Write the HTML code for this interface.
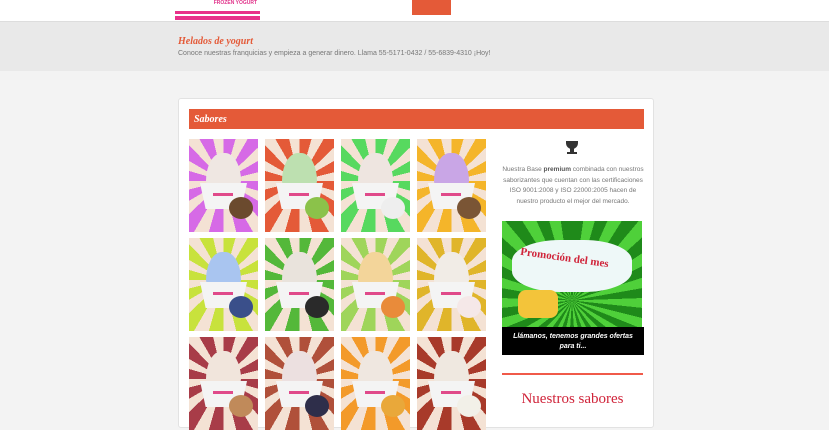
<!DOCTYPE html>
<html><head><meta charset="utf-8"><style>
*{margin:0;padding:0;box-sizing:border-box}
body{width:829px;height:410px;overflow:hidden;background:#f3f3f3;font-family:"Liberation Sans",sans-serif;position:relative}
.hdr{position:absolute;left:0;top:0;width:829px;height:22px;background:#fff;border-bottom:1px solid #ddd}
.band{position:absolute;left:0;top:22px;width:829px;height:49px;background:#e9e9e9}
.card{position:absolute;left:178px;top:98px;width:476px;height:330px;background:#fff;border:1px solid #e2e2e2;border-radius:3px}
.bar{position:absolute;left:189px;top:109px;width:455px;height:20px;background:#e45a38;color:#fff;font:italic bold 10px "Liberation Serif",serif;padding:5px 0 0 5px}
.t{position:absolute;width:69px;height:93px;overflow:hidden}
.cup{position:absolute;left:11px;top:44px;width:47px;height:26px;background:#f4f4f4;clip-path:polygon(0 0,100% 0,88% 100%,12% 100%);}
.cup:after{content:"";position:absolute;left:13px;top:10px;width:20px;height:3px;background:#e04a8a}
.ice{position:absolute;left:17px;top:14px;width:35px;height:34px;border-radius:50% 50% 20% 20%/90% 90% 20% 20%}
.fr{position:absolute;left:40px;top:58px;width:24px;height:22px;border-radius:50%}
</style></head><body>
<div class="hdr"></div>
<div style="position:absolute;left:195px;top:0;width:62px;height:8px;font:bold 5px 'Liberation Sans';color:#e0338a;text-align:right">FROZEN YOGURT</div>
<div style="position:absolute;left:175px;top:11px;width:85px;height:3px;background:#e8318a"></div>
<div style="position:absolute;left:175px;top:16px;width:85px;height:4px;background:#e8318a"></div>
<div style="position:absolute;left:412px;top:0;width:39px;height:15px;background:#e45a38"></div>
<div class="band"></div>
<div style="position:absolute;left:178px;top:36px;font:italic bold 10px 'Liberation Serif',serif;color:#e45a38">Helados de yogurt</div>
<div style="position:absolute;left:178px;top:50px;font-size:7px;color:#777">Conoce nuestras franquicias y empieza a generar dinero. Llama 55-5171-0432 / 55-6839-4310 ¡Hoy!</div>
<div class="card"></div>
<div class="bar">Sabores</div>

<div id="g"></div>
<script>
var rays=['#d66ae6','#e45a38','#57d95f','#f4b52a','#c8e23c','#54b83a','#9fd55a','#e0b52a','#a83c48','#b0503a','#f39a2a','#a83a2a'];
var ices=['#efe7e2','#bde0b0','#eee5e0','#c9a6e6','#a9c5f0','#e9e3dc','#f3d59a','#f1ece6','#f1e5dc','#ece0e0','#efe7e0','#efe8e0'];
var frs=['#6b4a2e','#8bc24a','#eeeeee','#7a5535','#3a4f8a','#2a2a2a','#e98b3a','#f5e8e8','#c08a5a','#2e2e4a','#e9a83a','#f2f0e8'];
var xs=[189,265,341,417],ys=[139,238,337],h='';
for(var i=0;i<12;i++){var x=xs[i%4],y=ys[Math.floor(i/4)];
h+='<div class="t" style="left:'+x+'px;top:'+y+'px;background:repeating-conic-gradient(from 0deg at 50% 45%,'+rays[i]+' 0 16deg,#f4e2d4 16deg 30deg)"><div class="ice" style="background:'+ices[i]+'"></div><div class="cup"></div><div class="fr" style="background:'+frs[i]+'"></div></div>';}
document.getElementById('g').innerHTML=h;
</script>

<div style="position:absolute;left:566px;top:141px;width:12px;height:8px;background:#333;border-radius:0 0 6px 6px"></div>
<div style="position:absolute;left:570px;top:148px;width:4px;height:4px;background:#333"></div>
<div style="position:absolute;left:567px;top:152px;width:10px;height:2px;background:#333"></div>
<div style="position:absolute;left:500px;top:165px;width:146px;font-size:6.5px;line-height:10.7px;color:#777;text-align:center">Nuestra Base <b style="color:#555">premium</b> combinada con nuestros saborizantes que cuentan con las certificaciones ISO 9001:2008 y ISO 22000:2005 hacen de nuestro producto el mejor del mercado.</div>
<div style="position:absolute;left:502px;top:221px;width:140px;height:106px;background:repeating-conic-gradient(from 0deg at 50% 75%,#1f8a1a 0 8deg,#4fd03a 8deg 16deg)"></div>
<div style="position:absolute;left:512px;top:240px;width:120px;height:52px;background:#eef8f8;border-radius:40%"></div>
<div style="position:absolute;left:520px;top:252px;font:bold 11px 'Liberation Serif',serif;color:#d0243a;transform:rotate(8deg)">Promoción del mes</div>
<div style="position:absolute;left:518px;top:290px;width:40px;height:28px;background:#f3c43a;border-radius:8px"></div>
<div style="position:absolute;left:502px;top:327px;width:142px;height:28px;background:#000;color:#fff;font:italic bold 7px 'Liberation Sans';text-align:center;padding-top:5px;line-height:10px">Llámanos, tenemos grandes ofertas<br>para ti...</div>
<div style="position:absolute;left:502px;top:373px;width:141px;height:2px;background:#f05a4a"></div>
<div style="position:absolute;left:502px;top:391px;width:141px;text-align:center;font:15px 'Liberation Serif',serif;color:#d0243a">Nuestros sabores</div>
</body></html>
